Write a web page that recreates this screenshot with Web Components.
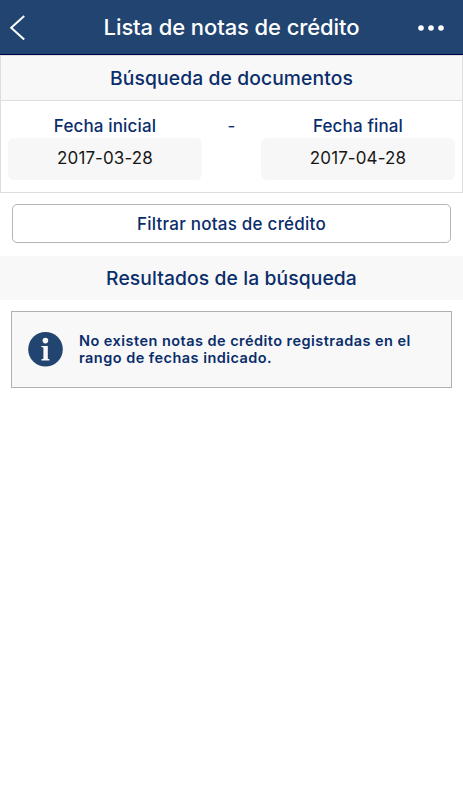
<!DOCTYPE html>
<html lang="es">
<head>
	<meta charset="utf-8">
	<meta name="viewport" content="width=device-width, initial-scale=1">
	<title>Lista de notas de crédito</title>
	<style>
		body {
			margin: 0;
			background: #fff;
			color: #0a2d6b;
			font-family: Inter, "Liberation Sans", sans-serif;
		}
	</style>
</head>
<body>
	<credit-notes-page></credit-notes-page>

	<script>
		window.customElements.define(
			'app-titlebar',
			class extends HTMLElement {
				constructor() {
					super();

					const root = this.attachShadow({ mode: 'open' });
					root.innerHTML = `
						<style>
							:host {
								display: grid;
								grid-template-columns: 64px 1fr 64px;
								align-items: center;
								box-sizing: border-box;
								height: 55px;
								background: #214570;
								border-bottom: 1px solid #00004b;
								color: #fff;
							}
							h1 {
								margin: 0;
								font-size: 22px;
								font-weight: 500;
								line-height: 54px;
								letter-spacing: -0.1px;
								text-align: center;
								white-space: nowrap;
							}
							svg {
								display: block;
							}
						</style>
						<svg width="64" height="54" fill="none" stroke="#fff" stroke-width="2">
							<path d="M24.2 16 L11.2 27.7 L24.2 39.5"/>
						</svg>
						<h1><slot></slot></h1>
						<svg width="64" height="54" fill="#fff">
							<circle cx="22" cy="28" r="2.8"/>
							<circle cx="32" cy="28" r="2.8"/>
							<circle cx="42" cy="28" r="2.8"/>
						</svg>
						`;
				}
			}
		);

		window.customElements.define(
			'section-heading',
			class extends HTMLElement {
				constructor() {
					super();

					const root = this.attachShadow({ mode: 'open' });
					root.innerHTML = `
						<style>
							:host {
								display: block;
								background: #f8f8f8;
							}
							h2 {
								margin: 0;
								font-size: 19.3px;
								font-weight: 500;
								line-height: 44px;
								letter-spacing: 0.1px;
								text-align: center;
								white-space: nowrap;
							}
						</style>
						<h2><slot></slot></h2>
						`;
				}
			}
		);

		window.customElements.define(
			'date-field',
			class extends HTMLElement {
				constructor() {
					super();

					const root = this.attachShadow({ mode: 'open' });
					root.innerHTML = `
						<style>
							:host {
								display: block;
								text-align: center;
								font-size: 17px;
							}
							.label {
								height: 25px;
								line-height: 27px;
								font-weight: 500;
								letter-spacing: 0.14px;
							}
							.value {
								height: 42px;
								line-height: 40px;
								border-radius: 6px;
								background: #f7f7f7;
								color: #171717;
								letter-spacing: 0.1px;
							}
						</style>
						<div class="label"><slot name="label"></slot></div>
						<div class="value"><slot></slot></div>
						`;
				}
			}
		);

		window.customElements.define(
			'filter-button',
			class extends HTMLElement {
				constructor() {
					super();

					const root = this.attachShadow({ mode: 'open' });
					root.innerHTML = `
						<style>
							:host {
								display: block;
							}
							button {
								display: block;
								box-sizing: border-box;
								width: 100%;
								height: 39px;
								padding: 1px 0 0;
								border: 1px solid #b5b5b5;
								border-radius: 5px;
								background: #fff;
								color: inherit;
								font: 500 17px/37px Inter, "Liberation Sans", sans-serif;
								letter-spacing: 0.23px;
							}
						</style>
						<button type="button"><slot></slot></button>
						`;
				}
			}
		);

		window.customElements.define(
			'info-message',
			class extends HTMLElement {
				constructor() {
					super();

					const root = this.attachShadow({ mode: 'open' });
					root.innerHTML = `
						<style>
							:host {
								display: flex;
								align-items: center;
								gap: 16px;
								box-sizing: border-box;
								height: 77px;
								padding: 0 16px;
								border: 1px solid #b0b0b0;
								background: #f8f8f8;
							}
							svg {
								flex: none;
							}
							p {
								margin: 0;
								padding-bottom: 2px;
								font-size: 14.5px;
								font-weight: 600;
								line-height: 17px;
								letter-spacing: 0.46px;
								white-space: nowrap;
							}
						</style>
						<svg width="35" height="35" viewBox="0 0 35 35">
							<circle cx="17.5" cy="17.3" r="17.3" fill="#214570"/>
							<g fill="#f8f8f8">
								<circle cx="17.4" cy="8.6" r="2.8"/>
								<path d="M13.3 14 H19.8 V26.8 L21.4 27.2 V28.5 H13.4 V27.2 L15.4 26.8 V15.6 L13.3 15.1 Z"/>
							</g>
						</svg>
						<p><slot></slot></p>
						`;
				}
			}
		);

		window.customElements.define(
			'credit-notes-page',
			class extends HTMLElement {
				constructor() {
					super();

					const root = this.attachShadow({ mode: 'open' });
					root.innerHTML = `
						<style>
							:host {
								display: block;
							}
							.search {
								box-sizing: border-box;
								height: 138px;
								border: 1px solid #dedede;
							}
							.search section-heading {
								border-bottom: 1px solid #dedede;
							}
							.dates {
								display: grid;
								grid-template-columns: 194px 1fr 194px;
								padding: 12px 7px 0;
							}
							.dash {
								font-size: 17px;
								line-height: 27px;
								text-align: center;
							}
							filter-button {
								margin: 11px 12px 13px;
							}
							info-message {
								margin: 11px 11px 0;
							}
						</style>
						<app-titlebar>Lista de notas de crédito</app-titlebar>
						<main>
							<section class="search">
								<section-heading>Búsqueda de documentos</section-heading>
								<div class="dates">
									<date-field><span slot="label">Fecha inicial</span>2017-03-28</date-field>
									<div class="dash">-</div>
									<date-field><span slot="label">Fecha final</span>2017-04-28</date-field>
								</div>
							</section>
							<filter-button>Filtrar notas de crédito</filter-button>
							<section-heading>Resultados de la búsqueda</section-heading>
							<info-message>No existen notas de crédito registradas en el<br>rango de fechas indicado.</info-message>
						</main>
						`;
				}
			}
		);
	</script>
</body>
</html>
